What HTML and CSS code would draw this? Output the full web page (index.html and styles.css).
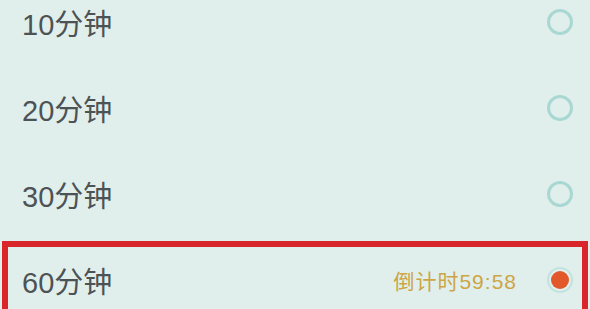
FILE: index.html
```html
<!DOCTYPE html>
<html lang="zh-CN">
<head>
    <meta charset="UTF-8">
    <meta name="viewport" content="width=device-width, initial-scale=1.0">
    <title>定时关闭</title>
    <link rel="stylesheet" href="styles.css">
</head>
<body>

<ul class="timer-list">
    <li class="option">
        <span class="label">10分钟</span>
        <span class="radio"></span>
    </li>
    <li class="option">
        <span class="label">20分钟</span>
        <span class="radio"></span>
    </li>
    <li class="option">
        <span class="label">30分钟</span>
        <span class="radio"></span>
    </li>
    <!-- 当前选中项 -->
    <li class="option selected">
        <span class="label">60分钟</span>
        <span class="countdown">倒计时59:58</span>
        <span class="radio checked"></span>
    </li>
</ul>

</body>
</html>
```

FILE: styles.css
```css
body {
    margin: 0;
    background-color: #e0efec;
    font-family: "Liberation Sans", "Noto Sans CJK SC", sans-serif;
    overflow: hidden;
}
.timer-list {
    list-style: none;
    margin: -21px 0 0;
    padding: 0;
}
.option {
    display: flex;
    align-items: center;
    height: 86px;
    padding: 0 17px 0 22px;
    box-sizing: border-box;
}
.label {
    flex: 1;
    font-size: 29px;
    color: #4d5255;
}
.countdown {
    font-size: 21px;
    letter-spacing: 1px;
    color: #cda545;
    margin-right: 30px;
}
.radio {
    width: 26px;
    height: 26px;
    border: 3px solid #a9d8d3;
    border-radius: 50%;
    box-sizing: border-box;
    display: flex;
    align-items: center;
    justify-content: center;
}
.radio.checked {
    border: 2px solid #c2e2de;
}
.radio.checked::before {
    content: "";
    width: 18px;
    height: 18px;
    border-radius: 50%;
    background-color: #e2582b;
}
/* 选中行的红框 */
.option.selected {
    margin: 4px 2px 0;
    border: 6px solid #d9262a;
    border-bottom: none;
    height: 72px;
    padding: 0 9px 0 14px;
}
```
